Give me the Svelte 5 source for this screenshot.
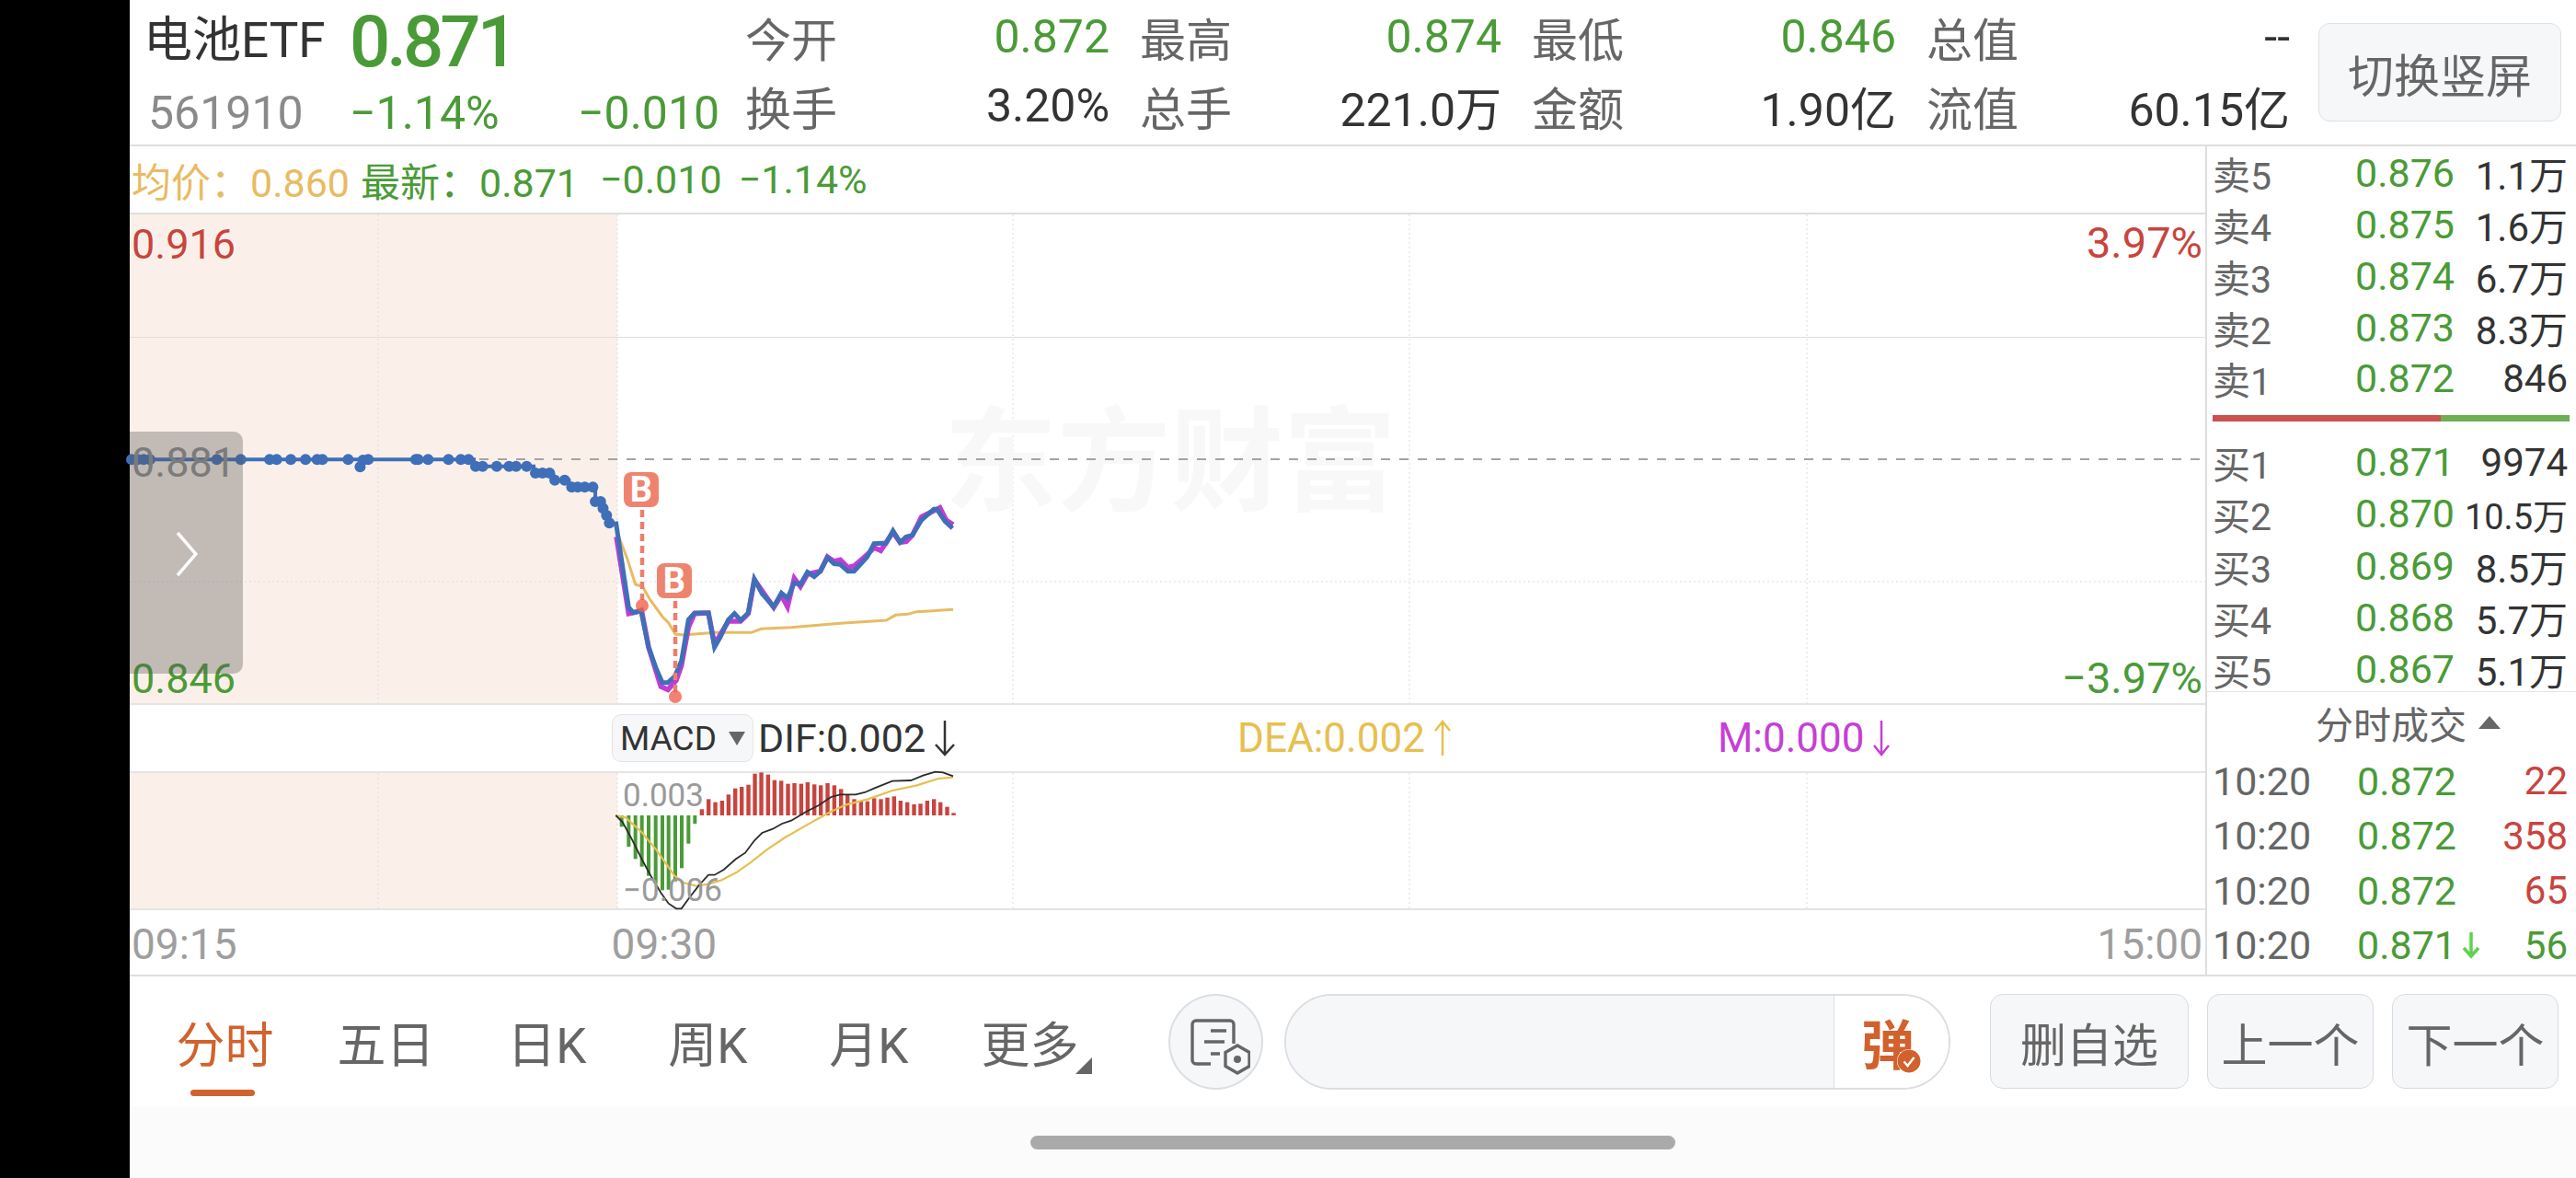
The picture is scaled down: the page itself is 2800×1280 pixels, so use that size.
<script lang="ts">
	// 分时 chart, landscape quote page. Chart data is kept in page pixels via the helpers below.
	const at6 = (pts: number[][]) => pts.map(([x, y]) => `${620 + x / 3},${500 + y / 3}`).join(' ');
	const at7 = (pts: number[][]) => pts.map(([x, y]) => `${620 + x / 3},${760 + y / 3}`).join(' ');
	const at5 = (pts: number[][]) => pts.map(([x, y]) => `${140 + x / 2.613},${440 + y / 3}`).join(' ');

	const stats = [
		['今开', '0.872', 'up', '换手', '3.20%', ''],
		['最高', '0.874', 'up', '总手', '221.0万', ''],
		['最低', '0.846', 'up', '金额', '1.90亿', ''],
		['总值', '--', '', '流值', '60.15亿', '']
	];
	const sells = [
		['卖5', '0.876', '1.1万'],
		['卖4', '0.875', '1.6万'],
		['卖3', '0.874', '6.7万'],
		['卖2', '0.873', '8.3万'],
		['卖1', '0.872', '846']
	];
	const buys = [
		['买1', '0.871', '9974'],
		['买2', '0.870', '10.5万'],
		['买3', '0.869', '8.5万'],
		['买4', '0.868', '5.7万'],
		['买5', '0.867', '5.1万']
	];
	const trades = [
		{ price: '0.872', vol: '22', cls: 'red', down: false },
		{ price: '0.872', vol: '358', cls: 'red', down: false },
		{ price: '0.872', vol: '65', cls: 'red', down: false },
		{ price: '0.871', vol: '56', cls: 'grn', down: true }
	];
	const tabs = ['分时', '五日', '日K', '周K', '月K', '更多'];

	const preLine = at5([[0, 178], [980, 178], [980, 200], [1150, 200], [1150, 222], [1205, 222], [1210, 245], [1250, 245], [1252, 268], [1325, 268], [1325, 315], [1345, 337], [1357, 360], [1365, 385]]);
	const preDots = [
		[8, 178], [25, 178], [42, 178], [60, 178], [250, 178], [318, 178], [400, 178], [420, 178], [460, 178], [502, 178], [535, 178], [550, 178], [623, 178], [657, 202], [665, 180], [680, 178], [815, 178], [822, 178], [850, 178], [908, 178], [943, 178], [965, 178],
		[985, 200], [1005, 200], [1045, 200], [1080, 200], [1100, 200], [1130, 200],
		[1155, 222], [1175, 222], [1195, 222], [1210, 245], [1238, 245],
		[1258, 268], [1275, 268], [1295, 268], [1318, 268], [1325, 315], [1340, 315], [1347, 337], [1357, 360], [1365, 385]
	].map(([x, y]) => [140 + x / 2.613, 440 + y / 3]);

	const blue = at6([[148, 200], [190, 480], [205, 497], [230, 490], [255, 610], [280, 680], [300, 725], [318, 725], [340, 705], [362, 655], [385, 520], [405, 498], [450, 498], [470, 610], [490, 575], [515, 520], [535, 500], [555, 522], [580, 498], [600, 388], [625, 435], [663, 478], [688, 433], [708, 450], [730, 400], [750, 405], [773, 365], [795, 380], [815, 362], [838, 318], [860, 338], [880, 340], [905, 362], [925, 362], [968, 315], [990, 272], [1030, 270], [1052, 230], [1075, 268], [1095, 250], [1115, 245], [1145, 195], [1185, 160], [1195, 160], [1222, 200], [1246, 222]]);
	const purple = at6([[150, 250], [190, 500], [215, 495], [232, 490], [255, 610], [295, 738], [318, 748], [345, 718], [362, 670], [385, 545], [405, 500], [450, 498], [470, 600], [515, 525], [555, 525], [580, 500], [600, 390], [663, 480], [688, 440], [708, 478], [730, 385], [750, 412], [773, 372], [815, 362], [838, 315], [860, 330], [880, 325], [905, 350], [925, 345], [968, 308], [990, 285], [1012, 295], [1052, 235], [1075, 268], [1095, 265], [1115, 245], [1145, 185], [1205, 155], [1225, 195], [1248, 210]]);
	const avg = at6([[150, 230], [185, 320], [212, 405], [235, 412], [260, 455], [300, 510], [320, 530], [342, 567], [370, 570], [470, 562], [590, 562], [622, 550], [720, 545], [880, 532], [1030, 522], [1060, 505], [1100, 502], [1130, 494], [1248, 487]]);

	const greenBars = [[167, 415], [190, 480], [212, 520], [233, 545], [255, 575], [278, 600], [300, 622], [320, 620], [342, 593], [363, 550], [385, 470], [406, 405]];
	const redBars = [[428, 358], [450, 325], [472, 335], [494, 330], [515, 310], [537, 290], [558, 285], [580, 278], [601, 242], [622, 238], [644, 245], [665, 263], [687, 265], [709, 275], [730, 273], [752, 275], [773, 270], [795, 277], [816, 280], [838, 273], [860, 280], [882, 292], [903, 312], [925, 325], [947, 332], [968, 332], [990, 322], [1012, 325], [1033, 320], [1055, 316], [1076, 330], [1098, 335], [1120, 342], [1141, 340], [1163, 330], [1185, 325], [1206, 335], [1228, 350], [1249, 370]];
	const dif = at7([[148, 378], [170, 400], [200, 455], [235, 525], [265, 580], [295, 630], [320, 665], [345, 682], [362, 682], [385, 650], [420, 605], [450, 572], [470, 572], [500, 555], [540, 520], [570, 500], [600, 460], [625, 435], [660, 422], [690, 405], [720, 395], [770, 365], [810, 345], [850, 318], [880, 310], [930, 310], [960, 303], [990, 290], [1050, 266], [1110, 264], [1150, 248], [1190, 236], [1215, 238], [1248, 250]]);
	const dea = at7([[148, 378], [180, 385], [230, 430], [280, 490], [340, 575], [370, 598], [410, 608], [450, 602], [490, 590], [540, 565], [590, 530], [640, 490], [700, 450], [770, 410], [850, 365], [900, 343], [970, 325], [1050, 297], [1130, 280], [1200, 258], [1248, 254]]);
</script>

<div class="page">
	<div class="bezel"></div>
	<div class="screen">
		<header class="header">
			<div class="quote">
				<span class="name">电池ETF</span>
				<span class="price">0.871</span>
				<span></span>
				<span class="code">561910</span>
				<span class="grn low">−1.14%</span>
				<span class="grn low">−0.010</span>
			</div>
			<div class="stats">
				{#each stats as s}
					<div class="stat">
						<div class="pair"><span class="lab">{s[0]}</span><span class={s[2] ? 'grn' : 'dark'}>{s[1]}</span></div>
						<div class="pair"><span class="lab">{s[3]}</span><span class="dark">{s[4]}</span></div>
					</div>
				{/each}
			</div>
			<button class="switch">切换竖屏</button>
		</header>

		<div class="body">
			<section class="chart-col">
				<div class="legend">
					<span class="avg">均价：0.860</span>
					<span class="grn new">最新：0.871</span>
					<span class="grn m1">−0.010</span>
					<span class="grn m2">−1.14%</span>
				</div>

				<div class="main-chart">
					<svg class="plot" width="2256" height="531" viewBox="141 233 2256 531">
						<rect x="141" y="233" width="530" height="531" fill="#fbf0e9" />
						<g stroke="#dcdcdc" stroke-width="1" stroke-dasharray="2 3">
							<line x1="411" y1="233" x2="411" y2="764" />
							<line x1="671" y1="233" x2="671" y2="764" />
							<line x1="1101" y1="233" x2="1101" y2="764" />
							<line x1="1532" y1="233" x2="1532" y2="764" />
							<line x1="1964" y1="233" x2="1964" y2="764" />
							<line x1="141" y1="632" x2="2397" y2="632" />
						</g>
						<line x1="671" y1="366.5" x2="2397" y2="366.5" stroke="#dedede" />
						<line x1="141" y1="366.5" x2="671" y2="366.5" stroke="#e6dcd6" />
						<text class="mark" x="1272" y="545" text-anchor="middle">东方财富</text>
						<line x1="141" y1="499" x2="2397" y2="499" stroke="#a3a3a3" stroke-width="2" stroke-dasharray="10 10" />

						<polyline points={avg} fill="none" stroke="#e8bb62" stroke-width="3" />
						<polyline points={purple} fill="none" stroke="#c23cd6" stroke-width="5.5" />
						<polyline points={preLine} fill="none" stroke="#3f6fb8" stroke-width="4" />
						{#each preDots as d}
							<circle cx={d[0]} cy={d[1]} r="6" fill="#3f6fb8" />
						{/each}
						<polyline points={blue} fill="none" stroke="#3f6fb8" stroke-width="5" />

						<g stroke="#ec7f6b" stroke-width="4.5" stroke-dasharray="8 5">
							<line x1="698" y1="554" x2="698" y2="652" />
							<line x1="734" y1="653" x2="734" y2="752" />
						</g>
						<circle cx="698" cy="658" r="7" fill="#f0604c" fill-opacity="0.8" />
						<circle cx="734" cy="757" r="7" fill="#f0604c" fill-opacity="0.8" />
						<rect x="678" y="513" width="38" height="38" rx="8" fill="#ee8470" />
						<rect x="714" y="612" width="38" height="38" rx="8" fill="#ee8470" />
						<text class="b" x="697" y="545" text-anchor="middle">B</text>
						<text class="b" x="733" y="644" text-anchor="middle">B</text>
					</svg>
					<span class="tag red" style="top: 10px">0.916</span>
					<span class="tag grey" style="top: 247px">0.881</span>
					<span class="tag grn" style="top: 482px">0.846</span>
					<span class="tag r red" style="top: 8px">3.97%</span>
					<span class="tag r grn" style="top: 481px">−3.97%</span>
					<div class="drawer">
						<svg width="24" height="50" viewBox="0 0 24 50">
							<polyline points="2,2 22,25 2,48" fill="none" stroke="#fff" stroke-width="3.5" />
						</svg>
					</div>
				</div>

				<div class="macd-row">
					<div class="macd-btn">MACD<i class="tri"></i></div>
					<span class="dif">DIF:0.002</span>
					<svg class="arrow" width="24" height="40" viewBox="0 0 24 40"><path d="M12 1V38M2 27L12 38L22 27" fill="none" stroke="#333" stroke-width="2.5" /></svg>
					<span class="dea">DEA:0.002</span>
					<svg class="arrow" width="20" height="40" viewBox="0 0 20 40"><path d="M10 39V2M2 12L10 2L18 12" fill="none" stroke="#e6c04f" stroke-width="2.5" /></svg>
					<span class="mval">M:0.000</span>
					<svg class="arrow" width="20" height="40" viewBox="0 0 20 40"><path d="M10 1V38M2 28L10 38L18 28" fill="none" stroke="#c63fd6" stroke-width="2.5" /></svg>
				</div>

				<div class="sub-chart">
					<svg class="plot" width="2256" height="147" viewBox="141 840 2256 147">
						<rect x="141" y="840" width="530" height="147" fill="#fbf0e9" />
						<g stroke="#dcdcdc" stroke-width="1" stroke-dasharray="2 3">
							<line x1="411" y1="840" x2="411" y2="987" />
							<line x1="671" y1="840" x2="671" y2="987" />
							<line x1="1101" y1="840" x2="1101" y2="987" />
							<line x1="1532" y1="840" x2="1532" y2="987" />
							<line x1="1964" y1="840" x2="1964" y2="987" />
						</g>
						{#each greenBars as b}
							<rect x={620 + b[0] / 3 - 2} y="886" width="4" height={(b[1] - 378) / 3} fill="#4a9b37" />
						{/each}
						{#each redBars as b}
							<rect x={620 + b[0] / 3 - 2} y={760 + b[1] / 3} width="4.4" height={(378 - b[1]) / 3} fill="#c8443e" />
						{/each}
						<polyline points={dea} fill="none" stroke="#e6c04f" stroke-width="2.2" />
						<polyline points={dif} fill="none" stroke="#2b2b2b" stroke-width="1.8" />
					</svg>
					<span class="axis" style="top: 6px">0.003</span>
					<span class="axis" style="top: 109px">−0.006</span>
				</div>

				<div class="times">
					<span>09:15</span>
					<span class="t930">09:30</span>
					<span class="t1500">15:00</span>
				</div>
			</section>

			<aside class="side">
				<div class="book">
					{#each sells as r}
						<div class="row"><span class="lab">{r[0]}</span><span class="grn">{r[1]}</span><span class="vol" class:tight={r[2].length > 4}>{r[2]}</span></div>
					{/each}
					<div class="ratio"><div class="ratio-r"></div><div class="ratio-g"></div></div>
					{#each buys as r}
						<div class="row"><span class="lab">{r[0]}</span><span class="grn">{r[1]}</span><span class="vol" class:tight={r[2].length > 4}>{r[2]}</span></div>
					{/each}
				</div>
				<div class="trades-head">分时成交<i class="up-tri"></i></div>
				{#each trades as t}
					<div class="trade">
						<span class="lab">10:20</span>
						<span class="grn tp">{t.price}
							{#if t.down}
								<svg class="tarrow" width="20" height="30" viewBox="0 0 20 30"><path d="M10 1V27M2 18L10 27L18 18" fill="none" stroke="#5cd44d" stroke-width="3.5" /></svg>
							{/if}
						</span>
						<span class="vol {t.cls}">{t.vol}</span>
					</div>
				{/each}
			</aside>
		</div>

		<div class="toolbar">
			<nav class="tabs">
				{#each tabs as t, i}
					<div class="tab" class:active={i === 0}>
						{t}
						{#if t === '更多'}
							<svg class="more" width="18" height="18" viewBox="0 0 18 18"><path d="M18 0V18H0Z" fill="#666" /></svg>
						{/if}
					</div>
				{/each}
			</nav>
			<button class="round" aria-label="设置">
				<svg width="70" height="64" viewBox="0 0 70 64">
					<path d="M52 30V9a4 4 0 0 0-4-4H11a4 4 0 0 0-4 4V48a4 4 0 0 0 4 4H27" fill="none" stroke="#666" stroke-width="3.4" />
					<path d="M27 16H44M20 28H42M27 41H37" fill="none" stroke="#666" stroke-width="3.4" />
					<path d="M56 33L69 40.500V55.500L56 63L43 55.500V40.500Z" fill="none" stroke="#666" stroke-width="3.4" transform="translate(0 -1)" />
					<circle cx="56" cy="47" r="4" fill="#666" />
				</svg>
			</button>
			<div class="danmu">
				<div class="danmu-input"></div>
				<div class="danmu-btn">
					<span>弹</span>
					<svg class="check" width="26" height="26" viewBox="0 0 26 26">
						<circle cx="13" cy="13" r="12.500" fill="#d2622d" />
						<path d="M7.500 13.500L11.500 18L18.500 9" fill="none" stroke="#fff" stroke-width="2.4" />
					</svg>
				</div>
			</div>
			<button class="act del">删自选</button>
			<button class="act nxt">上一个</button>
			<button class="act nxt">下一个</button>
		</div>

		<div class="navbar"><div class="pill"></div></div>
	</div>
</div>

<style>
	:global(body) {
		margin: 0;
		background: #fff;
		overflow: hidden;
	}
	.page {
		display: flex;
		width: 2800px;
		height: 1280px;
		font-family: Roboto, 'Noto Sans CJK SC', sans-serif;
		color: #333;
	}
	.bezel {
		width: 141px;
		background: #000;
	}
	.screen {
		display: flex;
		flex-direction: column;
		width: 2659px;
	}
	.grn {
		color: #4a9b37;
	}
	.red {
		color: #c8443e;
	}
	.dark {
		color: #333;
	}
	.lab {
		color: #666;
	}

	/* ---- header ---- */
	.header {
		display: flex;
		box-sizing: border-box;
		height: 159px;
		border-bottom: 2px solid #dedede;
		font-size: 50px;
	}
	.quote {
		box-sizing: border-box;
		width: 669px;
		padding-left: 15px;
		display: grid;
		grid-template-columns: 224px 248px 1fr;
		grid-template-rows: 84px 74px;
		align-items: center;
		white-space: nowrap;
	}
	.name {
		padding-bottom: 6px;
		font-size: 53px;
		color: #333;
	}
	.price {
		padding-top: 6px;
		font-size: 78px;
		font-weight: 500;
		letter-spacing: -4px;
		color: #4a9b37;
	}
	.code {
		padding: 3px 0 0 5px;
		color: #8a8a8a;
	}
	.low {
		padding-top: 3px;
	}
	.stats {
		display: grid;
		grid-template-columns: 396px 393px 396px 395px;
		column-gap: 33px;
		white-space: nowrap;
	}
	.stat {
		display: flex;
		flex-direction: column;
	}
	.pair {
		display: flex;
		justify-content: space-between;
		align-items: center;
		height: 79px;
	}
	.pair + .pair {
		height: 72px;
	}
	.switch {
		box-sizing: border-box;
		width: 264px;
		height: 107px;
		margin: 25px 0 0 31px;
		background: #f6f7f9;
		border: 1px solid #dfe1e5;
		border-radius: 12px;
		color: #666;
		font: inherit;
		font-size: 50px;
		padding: 0;
	}

	/* ---- body ---- */
	.body {
		display: flex;
		box-sizing: border-box;
		height: 902px;
		border-bottom: 2px solid #dedede;
	}
	.chart-col {
		width: 2256px;
		display: flex;
		flex-direction: column;
	}
	.legend {
		box-sizing: border-box;
		height: 74px;
		border-bottom: 2px solid #dedede;
		display: flex;
		align-items: center;
		padding-left: 2px;
		font-size: 43px;
		white-space: nowrap;
	}
	.avg {
		color: #e8bb62;
	}
	.new {
		margin-left: 12px;
	}
	.m1 {
		margin-left: 23px;
	}
	.m2 {
		margin-left: 18px;
	}
	.main-chart {
		position: relative;
		box-sizing: border-box;
		height: 533px;
		border-bottom: 2px solid #e4e4e4;
	}
	.plot {
		display: block;
		overflow: visible;
	}
	.mark {
		font-family: 'Noto Sans CJK SC', sans-serif;
		font-size: 123px;
		font-weight: 700;
		fill: #f8f8f8;
	}
	.b {
		font-family: Roboto, sans-serif;
		font-size: 38px;
		font-weight: 700;
		fill: #fff;
	}
	.tag {
		position: absolute;
		left: 2px;
		font-size: 45px;
		line-height: 46px;
	}
	.tag.r {
		left: auto;
		right: 3px;
		font-size: 47px;
	}
	.grey {
		color: #8f8f8f;
	}
	.drawer {
		position: absolute;
		left: 0;
		top: 236px;
		width: 123px;
		height: 263px;
		border-radius: 0 10px 10px 0;
		background: rgba(85, 85, 85, 0.35);
		display: flex;
		align-items: center;
		justify-content: center;
	}
	.drawer svg {
		margin-top: 2px;
	}
	.macd-row {
		box-sizing: border-box;
		height: 74px;
		border-bottom: 2px solid #e4e4e4;
		display: flex;
		align-items: center;
		padding-left: 524px;
		font-size: 43px;
		white-space: nowrap;
	}
	.macd-btn {
		box-sizing: border-box;
		width: 154px;
		height: 52px;
		display: flex;
		align-items: center;
		padding-left: 8px;
		background: #f6f7f9;
		border: 1px solid #e2e4e8;
		border-radius: 10px;
		font-size: 37px;
	}
	.tri {
		width: 0;
		height: 0;
		margin-left: 13px;
		border-left: 9px solid transparent;
		border-right: 9px solid transparent;
		border-top: 15px solid #666;
	}
	.dif {
		margin-left: 5px;
	}
	.arrow {
		flex: none;
		margin-left: 9px;
	}
	.dea {
		margin-left: 306px;
		font-size: 44px;
		color: #e6c04f;
	}
	.mval {
		margin-left: 289px;
		font-size: 44px;
		color: #c63fd6;
	}
	.sub-chart {
		position: relative;
		box-sizing: border-box;
		height: 149px;
		border-bottom: 2px solid #e4e4e4;
	}
	.axis {
		position: absolute;
		left: 536px;
		font-size: 35px;
		line-height: 38px;
		color: #9a9a9a;
	}
	.times {
		display: flex;
		align-items: center;
		height: 70px;
		padding: 4px 0 0 2px;
		box-sizing: border-box;
		font-size: 46px;
		color: #9e9e9e;
	}
	.t930 {
		margin-left: 407px;
	}
	.t1500 {
		margin-left: auto;
		margin-right: 3px;
	}

	/* ---- order book ---- */
	.side {
		box-sizing: border-box;
		width: 403px;
		border-left: 2px solid #dedede;
		font-size: 43px;
	}
	.book {
		box-sizing: border-box;
		height: 595px;
		border-bottom: 1px solid #e4e4e4;
	}
	.row,
	.trade {
		display: grid;
		grid-template-columns: 155px 1fr auto;
		align-items: center;
		height: 56px;
		padding: 0 9px 0 6px;
		white-space: nowrap;
	}
	.row:first-child {
		margin-top: -2px;
	}
	.row .lab {
		font-size: 41px;
	}
	.vol {
		color: #333;
		font-size: 42px;
		text-align: right;
	}
	.vol.tight {
		font-size: 38px;
	}
	.vol.red {
		color: #c8443e;
	}
	.vol.grn {
		color: #4a9b37;
	}
	.ratio {
		display: flex;
		align-items: center;
		height: 35px;
		padding: 0 7px 0 6px;
	}
	.ratio-r {
		width: 248px;
		height: 7px;
		background: #c9524e;
	}
	.ratio-g {
		flex: 1;
		height: 7px;
		background: #6fae52;
	}
	.trades-head {
		display: flex;
		align-items: center;
		justify-content: center;
		box-sizing: border-box;
		height: 67px;
		padding: 0 0 2px 36px;
		font-size: 41px;
		color: #666;
	}
	.up-tri {
		width: 0;
		height: 0;
		margin-left: 13px;
		border-left: 12px solid transparent;
		border-right: 12px solid transparent;
		border-bottom: 14px solid #666;
	}
	.trade {
		height: 59.5px;
		grid-template-columns: 157px 1fr auto;
	}
	.tp {
		display: flex;
		align-items: center;
		gap: 6px;
	}

	/* ---- toolbar ---- */
	.toolbar {
		display: flex;
		align-items: center;
		height: 141px;
		padding-left: 16px;
		box-sizing: border-box;
	}
	.tabs {
		display: flex;
		width: 1050px;
		height: 100%;
	}
	.tab {
		position: relative;
		width: 175px;
		display: flex;
		align-items: center;
		justify-content: center;
		font-size: 53px;
		color: #666;
		padding-bottom: 0;
	}
	.tab.active {
		color: #d2622d;
	}
	.tab.active::after {
		content: '';
		position: absolute;
		left: 50px;
		bottom: 11px;
		width: 70px;
		height: 7px;
		border-radius: 4px;
		background: #d2622d;
	}
	.more {
		position: absolute;
		left: 137px;
		top: 88px;
	}
	.round {
		box-sizing: border-box;
		width: 103px;
		height: 104px;
		margin-left: 63px;
		padding: 0;
		background: #f6f7f9;
		border: 2px solid #dcdee3;
		border-radius: 50%;
		display: flex;
		align-items: center;
		justify-content: center;
	}
	.round svg {
		margin-left: 5px;
		margin-top: 8px;
	}
	.danmu {
		box-sizing: border-box;
		display: flex;
		width: 724px;
		height: 104px;
		margin-left: 23px;
		border: 2px solid #dcdee3;
		border-radius: 52px;
		overflow: hidden;
	}
	.danmu-input {
		flex: 1;
		background: #f6f7f9;
		border-right: 1px solid #dcdee3;
	}
	.danmu-btn {
		position: relative;
		width: 124px;
		background: #fff;
		display: flex;
		align-items: center;
		justify-content: center;
		font-size: 58px;
		font-weight: 700;
		color: #d2622d;
	}
	.danmu-btn span {
		margin-right: 8px;
	}
	.check {
		position: absolute;
		left: 68px;
		top: 58px;
		background: #fff;
		border-radius: 50%;
	}
	.act {
		box-sizing: border-box;
		height: 103px;
		margin-left: 20px;
		padding: 0;
		background: #f6f7f9;
		border: 1px solid #d9dbe0;
		border-radius: 14px;
		font: inherit;
		font-size: 50px;
		color: #666;
	}
	.del {
		width: 216px;
		margin-left: 43px;
	}
	.nxt {
		width: 181px;
	}
	.navbar {
		flex: 1;
		display: flex;
		justify-content: center;
		padding-top: 32px;
		background: #fbfbfb;
	}
	.pill {
		width: 701px;
		height: 15px;
		border-radius: 8px;
		background: #aaa;
	}
</style>
